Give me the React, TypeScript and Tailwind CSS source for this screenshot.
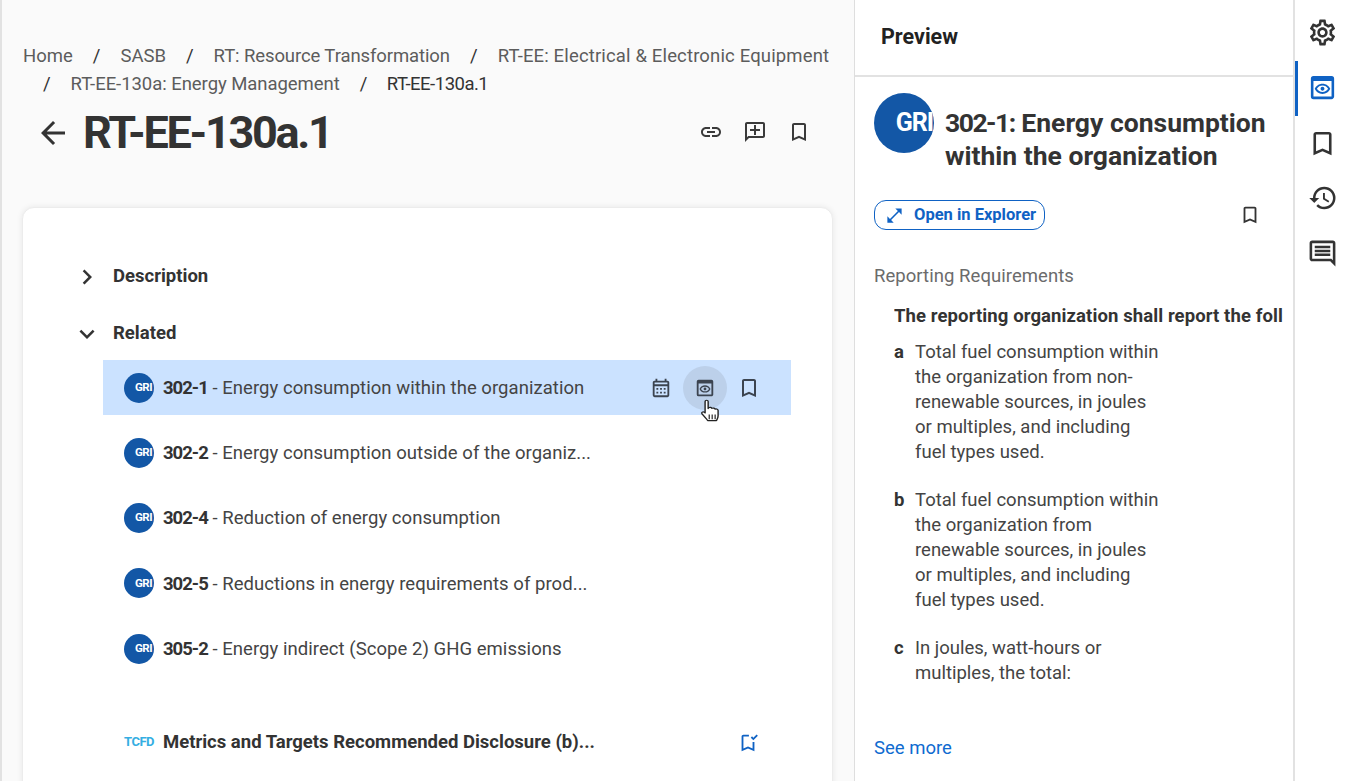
import React from "react";
import {
  MdArrowBack,
  MdBookmarkBorder,
  MdChevronRight,
  MdExpandMore,
  MdHistory,
  MdLink,
  MdOpenInFull,
  MdOutlineAddComment,
  MdOutlineBookmarkAdded,
  MdOutlineCalendarMonth,
  MdOutlineComment,
  MdOutlinePreview,
  MdOutlineSettings,
} from "react-icons/md";

const crumbs = [
  { label: "SASB", cls: "" },
  { label: "RT: Resource Transformation", cls: "tracking-[-0.1px]" },
  { label: "RT-EE: Electrical & Electronic Equipment", cls: "tracking-[0.15px]" },
  { label: "RT-EE-130a: Energy Management", cls: "tracking-[-0.05px]" },
];

const related = [
  { code: "302-1", title: "Energy consumption within the organization", active: true },
  { code: "302-2", title: "Energy consumption outside of the organiz..." },
  { code: "302-4", title: "Reduction of energy consumption" },
  { code: "302-5", title: "Reductions in energy requirements of prod..." },
  { code: "305-2", title: "Energy indirect (Scope 2) GHG emissions" },
];

const requirements = [
  {
    letter: "a",
    text: "Total fuel consumption within the organization from non-renewable sources, in joules or multiples, and including fuel types used.",
  },
  {
    letter: "b",
    text: "Total fuel consumption within the organization from renewable sources, in joules or multiples, and including fuel types used.",
  },
  { letter: "c", text: "In joules, watt-hours or multiples, the total:" },
];

const GriLogo = ({ big }: { big?: boolean }) => (
  <div
    className={
      big
        ? "w-[60px] h-[60px] shrink-0 rounded-full bg-[#1357a6] flex items-center justify-end overflow-hidden text-white font-bold text-[25px] tracking-[-1px] pr-px"
        : "w-[30px] h-[30px] shrink-0 rounded-full bg-[#1357a6] flex items-center justify-end overflow-hidden text-white font-bold text-[11.500px] tracking-[-0.5px] pr-[2px]"
    }
  >
    GRI
  </div>
);

// hand pointer sitting over the preview button
const HandCursor = () => (
  <svg className="absolute left-[15px] top-[33px]" width="26" height="25" viewBox="0 0 22 26" preserveAspectRatio="none">
    <path
      d="M6 2.500c0-1.600 2.600-1.600 2.600 0V10l.3-1c1.400-.7 2.500-.3 2.800.7 1.300-.6 2.400-.2 2.700.8 1.400-.5 2.600.1 2.600 1.500v5.500c0 2.500-.9 3.500-1.400 5H8.200c-.9-2-2.600-3.600-4.800-7-.9-1.600.8-2.800 2.100-1.600L6 14.500z"
      fill="#fff"
      stroke="#222"
      strokeWidth="1.200"
      strokeLinejoin="round"
    />
    <path d="M9.500 16v5M12 16v5M14.500 16v5" stroke="#222" strokeWidth="1" />
  </svg>
);

function RelatedRow({ item }: { item: (typeof related)[number] }) {
  return (
    <div className={`h-[55px] flex items-center pl-[21px] pr-[20px] ${item.active ? "bg-[#cbe2ff]" : ""}`}>
      <GriLogo />
      <p className="ml-[9px] pt-[2px] flex-1 text-[18.500px] tracking-[0.05px] text-[#444] whitespace-nowrap">
        <span className="font-bold text-[#333] tracking-[-1px]">{item.code}</span> - {item.title}
      </p>
      {item.active && (
        <div className="flex items-center text-[#3c4450]">
          <div className="w-[44px] h-[44px] flex items-center justify-center">
            <MdOutlineCalendarMonth size={22} />
          </div>
          <div className="relative w-[44px] h-[44px] rounded-full bg-[#bcd0ea] flex items-center justify-center">
            <MdOutlinePreview size={22} />
            <HandCursor />
          </div>
          <div className="w-[44px] h-[44px] flex items-center justify-center">
            <MdBookmarkBorder size={24} />
          </div>
        </div>
      )}
    </div>
  );
}

export default function App() {
  return (
    <div className="flex h-[781px] overflow-hidden bg-white text-[#333] font-['Roboto','Liberation_Sans',sans-serif]">
      {/* main column */}
      <main className="w-[854px] shrink-0 bg-[#fafafa] border-l-2 border-[#e2e2e2] pl-[21px] pr-[21px] pt-[42px]">
        <nav className="flex flex-wrap text-[18.500px] leading-[28px] text-[#5c5c5c]">
          <span>Home</span>
          {crumbs.map((c) => (
            <span key={c.label} className={`flex ${c.cls}`}>
              <span className="mx-[20px] text-[#333]">/</span>
              {c.label}
            </span>
          ))}
          <span className="flex text-[#333] tracking-[-0.5px]">
            <span className="mx-[20px]">/</span>
            RT-EE-130a.1
          </span>
        </nav>

        <div className="h-[69px] flex items-center">
          <MdArrowBack size={36} className="ml-[12px] text-[#333]" />
          <h1 className="ml-[12px] flex-1 text-[45px] font-bold tracking-[-2.300px] text-[#333]">RT-EE-130a.1</h1>
          <div className="flex items-center gap-[20px] mr-[22px] mb-[2px] text-[#3a3a3a]">
            <MdLink size={24} className="ml-px" />
            <MdOutlineAddComment size={24} className="-scale-x-100" />
            <MdBookmarkBorder size={24} />
          </div>
        </div>

        <section className="mt-[40px] -ml-px h-[640px] bg-white rounded-t-xl border border-[#ececec] shadow-[0_0_6px_rgba(0,0,0,0.08)] pt-[55px] pr-[41px]">
          <div className="h-[28px] flex items-center">
            <MdChevronRight size={30} className="ml-[49px] text-[#333]" />
            <span className="ml-[11px] text-[18.500px] font-bold">Description</span>
          </div>
          <div className="mt-[29px] h-[28px] flex items-center">
            <MdExpandMore size={30} className="ml-[49px] text-[#333]" />
            <span className="ml-[11px] text-[18.500px] font-bold">Related</span>
          </div>
          <div className="mt-[12px] ml-[80px] flex flex-col gap-[10.300px]">
            {related.map((r) => (
              <RelatedRow key={r.code} item={r} />
            ))}
          </div>
          <div className="mt-[38px] ml-[80px] h-[55px] flex items-center pl-[21px] pr-[32px]">
            <span className="w-[30px] text-[13px] font-bold text-[#35aee2] tracking-[-0.5px]">TCFD</span>
            <p className="ml-[9px] pt-[2px] flex-1 text-[18.500px] font-bold whitespace-nowrap">
              Metrics and Targets Recommended Disclosure (b)...
            </p>
            <MdOutlineBookmarkAdded size={22} className="text-[#0f62c4] mt-[2px]" />
          </div>
        </section>
      </main>

      {/* preview panel */}
      <aside className="relative w-[439px] shrink-0 flex flex-col border-l border-[#dedede] overflow-hidden">
        <header className="h-[77px] shrink-0 border-b-2 border-[#e2e2e2] pl-[26px] pt-[22px]">
          <h2 className="text-[21.500px] leading-[30px] font-bold text-[#222]">Preview</h2>
        </header>
        <div className="flex-1 pl-[19px] pt-[16px] overflow-hidden">
          <div className="flex">
            <GriLogo big />
            <h3 className="ml-[11px] mt-[13px] w-[340px] text-[26.500px] leading-[33px] font-bold text-[#333]">
              <span className="block">
                <span className="tracking-[-1.500px]">302-1:</span> Energy consumption
              </span>
              <span className="block">within the organization</span>
            </h3>
          </div>
          <div className="mt-[28px] flex items-center">
            <button className="w-[171px] h-[30px] flex items-center rounded-xl border border-[#0f62c4] bg-white text-[#0f62c4]">
              <MdOpenInFull size={19} className="ml-[10px]" />
              <span className="ml-[10px] text-[16.500px] font-bold whitespace-nowrap">Open in Explorer</span>
            </button>
            <MdBookmarkBorder size={22} className="ml-[194px] text-[#333]" />
          </div>
          <p className="mt-[32px] text-[18.500px] leading-[28px] tracking-[0.05px] text-[#6b6b6b]">Reporting Requirements</p>
          <div className="ml-[20px] h-[423px] overflow-hidden">
            <p className="mt-[12px] text-[18.500px] leading-[28px] font-bold tracking-[0.1px] text-[#333] whitespace-nowrap overflow-hidden w-[389px]">
              The reporting organization shall report the following information:
            </p>
            <div className="mt-[10px] flex flex-col gap-[23px]">
              {requirements.map((r) => (
                <div key={r.letter} className="flex text-[18.500px] leading-[25px] text-[#444]">
                  <span className="w-[21px] shrink-0 font-bold text-[#333]">{r.letter}</span>
                  <p className="w-[250px]">{r.text}</p>
                </div>
              ))}
            </div>
          </div>
          <a className="block mt-[21px] text-[18.500px] leading-[28px] text-[#0f6bd0]">See more</a>
        </div>
      </aside>

      {/* right rail */}
      <div className="flex-1 flex flex-col border-l-2 border-[#e2e2e2] pt-[6px] text-[#333]">
        <div className="h-[55px] flex items-center justify-center pb-[2px]">
          <MdOutlineSettings size={31} />
        </div>
        <div className="h-[55px] flex items-center justify-center border-l-[3px] border-[#0f62c4] text-[#0f62c4] pr-[3px] pb-[3px]">
          <MdOutlinePreview size={31} />
        </div>
        <div className="h-[55px] flex items-center justify-center">
          <MdBookmarkBorder size={31} />
        </div>
        <div className="h-[55px] flex items-center justify-center pb-[2px]">
          <MdHistory size={30} />
        </div>
        <div className="h-[55px] flex items-center justify-center">
          <MdOutlineComment size={31} />
        </div>
      </div>
    </div>
  );
}
